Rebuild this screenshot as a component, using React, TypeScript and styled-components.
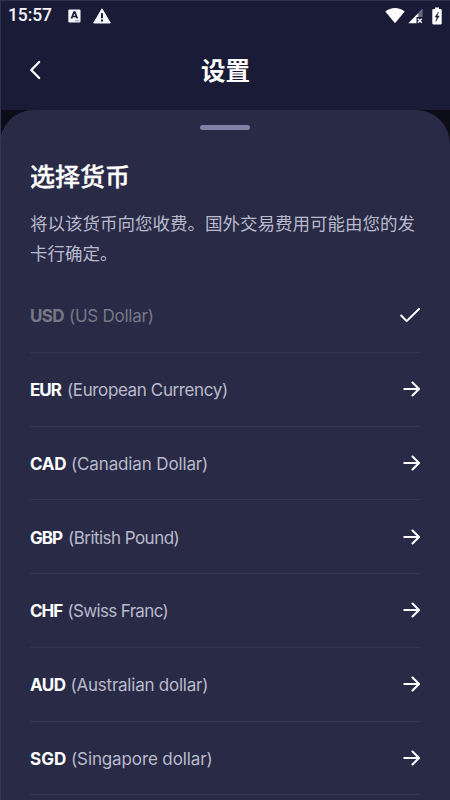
import React from "react";
import styled, { createGlobalStyle } from "styled-components";

const GlobalStyle = createGlobalStyle`
  * { box-sizing: border-box; }
  html, body { margin: 0; padding: 0; background: #0d0d19; }
`;

const Screen = styled.main`
  width: 450px;
  height: 800px;
  overflow: hidden;
  display: flex;
  flex-direction: column;
  background: #0d0d19;
  color: #fff;
  font-family: Inter, "Noto Sans CJK SC", sans-serif;
  box-shadow: inset 1px 1px #343653;
`;

const Top = styled.div`
  flex: none;
  height: 110px;
  background: #1a1b36;
  border-top: 1px solid #303249;
  border-left: 1px solid #303249;
`;

const StatusBar = styled.div`
  height: 29px;
  display: flex;
  align-items: center;
  padding: 0 8px 0 7px;
`;

const Clock = styled.time`
  width: 60px;
  font: 500 17.5px/29px Roboto, sans-serif;
  letter-spacing: -0.1px;
  color: #f5f5fa;
`;

const StatusGroup = styled.div<{ $end?: boolean }>`
  display: flex;
  align-items: center;
  gap: ${(p) => (p.$end ? 0 : 12)}px;
  margin-left: ${(p) => (p.$end ? "auto" : "0")};
  svg { display: block; }
`;

const NavBar = styled.header`
  height: 80px;
  display: grid;
  grid-template-columns: 70px 1fr 70px;
  align-items: center;
`;

const BackButton = styled.button`
  border: 0;
  padding: 0 0 0 27px;
  background: none;
  display: flex;
  color: #fff;
`;

const NavTitle = styled.h1`
  margin: 0;
  text-align: center;
  font: 700 24.5px/36px "Noto Sans CJK SC", sans-serif;
`;

const Sheet = styled.section`
  flex: 1;
  min-height: 0;
  overflow: hidden;
  background: #292a46;
  border-left: 1px solid #343653;
  border-radius: 34px 34px 0 0;
  padding: 15px 30px 0 29px;
`;

const Handle = styled.div`
  width: 50px;
  height: 5px;
  margin: 0 auto;
  border-radius: 3px;
  background: #8081a5;
`;

const SheetTitle = styled.h2`
  margin: 27px 0 0;
  font: 500 25px/36px "Noto Sans CJK SC", sans-serif;
  -webkit-text-stroke: 0.3px #fff;
`;

const Description = styled.p`
  margin: 15px -10px 0 0;
  font: 400 17.5px/30px "Noto Sans CJK SC", sans-serif;
  color: #b9bacb;
`;

const List = styled.ul`
  list-style: none;
  margin: 11px 0 0;
  padding: 0;
`;

const Row = styled.li<{ $selected?: boolean }>`
  height: 73.75px;
  display: flex;
  align-items: center;
  justify-content: space-between;
  border-bottom: 1px solid #343550;
  color: ${(p) => (p.$selected ? "#777887" : "#b9bacb")};
  svg { display: block; color: #fff; }
`;

const Label = styled.span`
  display: flex;
  padding-top: 2px;
  white-space: nowrap;
  font-size: 17px;
  line-height: 24px;
`;

const Code = styled.strong<{ $width: number; $spacing: number; $selected?: boolean }>`
  width: ${(p) => p.$width}px;
  font-weight: 700;
  letter-spacing: ${(p) => p.$spacing}px;
  color: ${(p) => (p.$selected ? "#777887" : "#fff")};
`;

const Name = styled.span<{ $spacing: number }>`
  letter-spacing: ${(p) => p.$spacing}px;
`;

const currencies = [
  { code: "USD", name: "US Dollar", width: 39, codeSpacing: -0.6, nameSpacing: -0.25, selected: true },
  { code: "EUR", name: "European Currency", width: 37, codeSpacing: -1, nameSpacing: -0.38 },
  { code: "CAD", name: "Canadian Dollar", width: 41, codeSpacing: -0.3, nameSpacing: -0.14 },
  { code: "GBP", name: "British Pound", width: 38, codeSpacing: -1, nameSpacing: -0.54 },
  { code: "CHF", name: "Swiss Franc", width: 37.5, codeSpacing: -1, nameSpacing: -0.66 },
  { code: "AUD", name: "Australian dollar", width: 40.5, codeSpacing: -0.5, nameSpacing: -0.23 },
  { code: "SGD", name: "Singapore dollar", width: 41, codeSpacing: 0, nameSpacing: -0.12 },
];

const LetterBadge = () => (
  <svg width="13" height="14" viewBox="0 0 13 14">
    <rect x="0.3" y="0.5" width="12.2" height="13" rx="1" fill="#f4f4fa" />
    <path d="M3.5 9.5 6 3h.8l2.5 6.5M4.5 7.5h4" fill="none" stroke="#1a1b36" strokeWidth="1.7" />
    <path d="M7 11.8h4.5" stroke="#9293a3" />
  </svg>
);

const Warning = () => (
  <svg width="18" height="16" viewBox="0 0 18 16">
    <path d="M9 .8 17.3 15H.7Z" fill="#f4f4fa" stroke="#f4f4fa" strokeLinejoin="round" />
    <path d="M9 5.2v5M9 11.5v2" stroke="#1a1b36" strokeWidth="2" />
  </svg>
);

const Wifi = () => (
  <svg width="20" height="17" viewBox="0 0 20 17">
    <path d="M.3 4.5C5.8-.2 14.2-.2 19.7 4.5L10 16.3Z" fill="#fff" />
  </svg>
);

const Signal = () => (
  <svg width="15" height="15" viewBox="0 0 15 15">
    <path d="M.3 14.2 14.2.3V8H8.5v6.2Z" fill="#fff" />
    <path d="M10.2 4.3 14.2.3V8h-4Z" fill="#64667c" />
    <path d="m9.8 9.8 4 4m0-4-4 4" stroke="#fff" strokeWidth="1.3" />
  </svg>
);

const Battery = () => (
  <svg width="10" height="18" viewBox="0 0 10 18">
    <path d="M3 .5h4V2h1.5Q9.7 2 9.7 3.2v13q0 1.2-1.2 1.2h-7Q.3 17.4.3 16.2v-13Q.3 2 1.5 2H3Z" fill="#fff" />
    <path d="M6.5 5 3 10h2l-1.3 4.5L7.3 9H5.2Z" fill="#1a1b36" stroke="#1a1b36" strokeWidth=".4" />
  </svg>
);

const Back = () => (
  <svg width="16" height="20" viewBox="0 0 16 20">
    <path d="M11.2 2 3.3 10l7.9 8" fill="none" stroke="currentColor" strokeWidth="2.3" strokeLinecap="round" strokeLinejoin="round" />
  </svg>
);

const Check = () => (
  <svg width="21" height="16" viewBox="0 0 21 16">
    <path d="m2.2 8.5 5.4 5.6L20 2" fill="none" stroke="currentColor" strokeWidth="2" strokeLinecap="round" strokeLinejoin="round" />
  </svg>
);

const Arrow = () => (
  <svg width="18" height="16" viewBox="0 0 18 16">
    <path d="M2.3 8H17M10.5 1.6 17 8l-6.5 6.4" fill="none" stroke="currentColor" strokeWidth="2.1" strokeLinecap="round" strokeLinejoin="round" />
  </svg>
);

const SignalSlot = styled.span`
  margin: 2px 9px 0 3px;
`;

export default function App() {
  return (
    <>
      <GlobalStyle />
      <Screen>
        <Top>
          <StatusBar>
            <Clock>15:57</Clock>
            <StatusGroup><LetterBadge /><Warning /></StatusGroup>
            <StatusGroup $end><Wifi /><SignalSlot><Signal /></SignalSlot><Battery /></StatusGroup>
          </StatusBar>
          <NavBar>
            <BackButton aria-label="返回"><Back /></BackButton>
            <NavTitle>设置</NavTitle>
          </NavBar>
        </Top>
        <Sheet>
          <Handle />
          <SheetTitle>选择货币</SheetTitle>
          <Description>将以该货币向您收费。国外交易费用可能由您的发卡行确定。</Description>
          <List>
            {currencies.map((c) => (
              <Row key={c.code} $selected={c.selected}>
                <Label>
                  <Code $width={c.width} $spacing={c.codeSpacing} $selected={c.selected}>{c.code}</Code>
                  <Name $spacing={c.nameSpacing}>({c.name})</Name>
                </Label>
                {c.selected ? <Check /> : <Arrow />}
              </Row>
            ))}
          </List>
        </Sheet>
      </Screen>
    </>
  );
}
